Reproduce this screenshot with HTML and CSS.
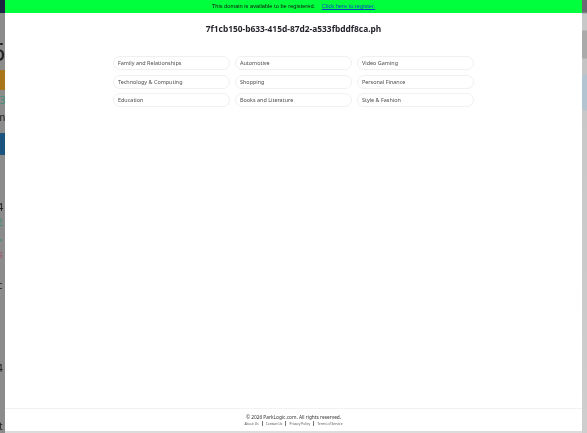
FILE: index.html
```html
<!DOCTYPE html>
<html lang="en">
<head>
<meta charset="utf-8">
<title>7f1cb150-b633-415d-87d2-a533fbddf8ca.ph</title>
<link rel="stylesheet" href="styles.css">
</head>
<body>
<div class="page">
  <aside class="strip strip-left">
    <div class="frag frag-dark"></div>
    <div class="frag frag-glyph">6</div>
    <div class="frag frag-orange"></div>
    <div class="frag frag-green">3</div>
    <div class="frag frag-m">m</div>
    <div class="frag frag-blue"></div>
    <div class="frag frag-four">4</div>
    <div class="frag frag-t1">2</div>
    <div class="frag frag-t2">&gt;</div>
    <div class="frag frag-t3">s</div>
    <div class="frag frag-c">c</div>
    <div class="frag frag-l">4</div>
    <div class="frag frag-end">t</div>
  </aside>
  <main class="sheet">
    <div class="notice">This domain is available to be registered. <a href="#">Click here to register.</a></div>
    <h1 class="domain">7f1cb150-b633-415d-87d2-a533fbddf8ca.ph</h1>
    <nav class="links">
      <a href="#">Family and Relationships</a>
      <a href="#">Automotive</a>
      <a href="#">Video Gaming</a>
      <a href="#">Technology &amp; Computing</a>
      <a href="#">Shopping</a>
      <a href="#">Personal Finance</a>
      <a href="#">Education</a>
      <a href="#">Books and Literature</a>
      <a href="#">Style &amp; Fashion</a>
    </nav>
    <footer class="foot">
      <p class="copy">© 2026 ParkLogic.com. All rights reserved.</p>
      <p class="legal"><a href="#">About Us</a><a href="#">Contact Us</a><a href="#">Privacy Policy</a><a href="#">Terms of Service</a></p>
    </footer>
  </main>
  <aside class="strip strip-right"></aside>
</div>
</body>
</html>
```
FILE: styles.css
```css
* { box-sizing: border-box; }
html, body { margin: 0; height: 100%; overflow: hidden; }
body { font-family: "Noto Sans", "Open Sans", sans-serif; color: #333; background: #fff; }
.page { display: flex; width: 587px; height: 433px; filter: blur(0.3px); }
.strip { flex: none; background: #8c8c8c; overflow: hidden; }
.strip-left { width: 5px; display: flex; flex-direction: column; }
.strip-right { width: 5px; background: linear-gradient(#6a6a74 0, #6a6a74 12px, #c8c8c8 14px, #c8c8c8 30px, #aaa 31px, #aaa 58px, #c4c4c4 59px, #c4c4c4 74px, #b4c4d0 75px, #b4c4d0 110px, #c8c8c8 111px, #cecece 100%); }
.frag { flex: none; }
.frag-dark { height: 13px; background: #1b2440; }
.frag-glyph { height: 57px; padding-top: 24px; font-size: 25px; line-height: 28px; text-indent: -9px; color: #222; }
.frag-orange { height: 20px; background: #a8751a; }
.frag-green { height: 18px; padding-top: 3px; font-size: 10px; line-height: 14px; color: #3e8f74; }
.frag-m { height: 25px; padding-top: 2px; font-size: 10px; line-height: 14px; text-indent: -4px; color: #222; }
.frag-blue { height: 22px; background: #1c5480; }
.frag-four { height: 16px; margin-top: 44px; font-size: 11px; line-height: 16px; text-indent: -3px; color: #222; }
.frag-t1 { height: 18px; font-size: 10px; line-height: 14px; text-indent: -3px; color: #3e8f74; }
.frag-t2 { height: 14px; font-size: 10px; line-height: 14px; text-indent: -3px; color: #3e8f74; }
.frag-t3 { height: 31px; font-size: 10px; line-height: 14px; text-indent: -2px; color: #a8546a; }
.frag-c { height: 83px; font-size: 11px; line-height: 14px; text-indent: -3px; color: #222; }
.frag-l { height: 58px; font-size: 10px; line-height: 14px; text-indent: -3px; color: #222; }
.frag-end { font-size: 10px; line-height: 14px; text-indent: -1px; color: #222; }
.sheet { flex: 1; min-width: 0; display: flex; flex-direction: column; background: #fff; }
.notice { height: 13px; background: #00ff3c; font-family: "Liberation Sans", Arial, sans-serif; font-size: 5.7px; line-height: 13px; text-align: center; color: #111; }
.notice a { margin-left: 5px; color: #0645c8; }
.domain { margin: 10px 0 0; font-size: 8.4px; line-height: 12px; font-weight: 700; text-align: center; color: #25252d; }
.links { display: grid; grid-template-columns: repeat(3, 117px); gap: 4.7px 5px; justify-content: center; margin-top: 21px; }
.links a { height: 14px; padding-left: 4px; border: 1px solid #f0f0f0; border-radius: 7px; font-size: 5.45px; line-height: 12px; color: #4a4a4a; text-decoration: none; }
.foot { margin-top: auto; height: 25px; border-top: 1px solid #f2f2f2; border-bottom: 2px solid #dcdcdc; text-align: center; padding-top: 5px; }
.copy { margin: 0; font-size: 4.8px; line-height: 7px; color: #333; }
.legal { margin: 0; display: flex; justify-content: center; font-size: 3.3px; line-height: 5px; }
.legal a { padding: 0 3px; color: #555; text-decoration: none; border-left: 1px solid #777; }
.legal a:first-child { border-left: 0; }
```
